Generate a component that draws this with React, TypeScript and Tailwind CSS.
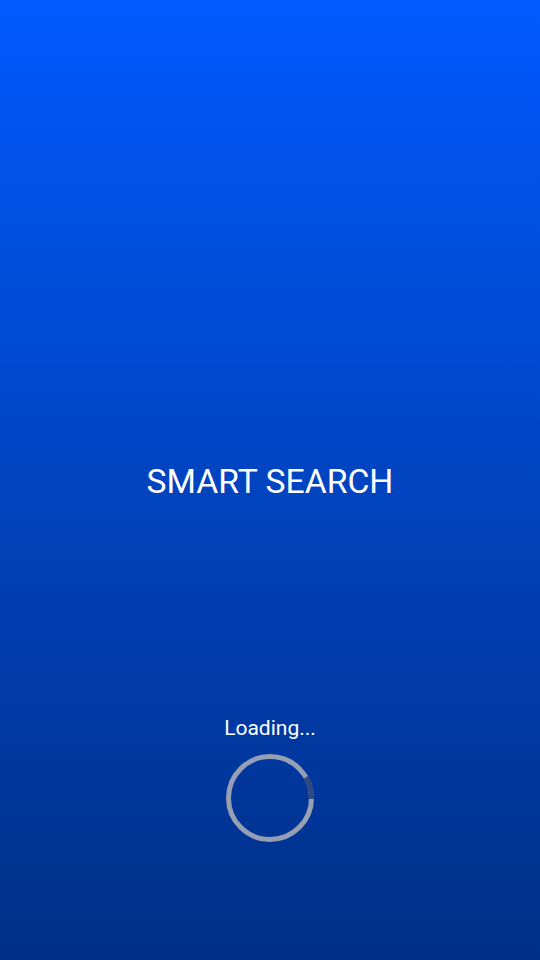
export default function App() {
  return (
    <div
      className="w-[540px] h-[960px] flex flex-col items-center bg-gradient-to-b from-[#005aff] to-[#002f86] text-white"
      style={{ fontFamily: "Roboto, 'Liberation Sans', sans-serif" }}
    >
      <h1 className="mt-[462px] text-[33.7px] leading-[40px] font-normal">SMART SEARCH</h1>
      <p className="mt-[214px] text-[21px] leading-[24px]">Loading...</p>
      <div className="mt-[12px] w-[92px] h-[92px]">
        <svg width="92" height="92" viewBox="0 0 92 92">
          <circle cx="46" cy="46" r="41.5" fill="none" stroke="#b0b2b8" strokeOpacity="0.85" strokeWidth="5" />
          <path
            d="M 81.9 25.25 A 41.5 41.5 0 0 1 87.5 47"
            fill="none"
            stroke="#2e4a84"
            strokeWidth="5.5"
          />
        </svg>
      </div>
    </div>
  );
}
